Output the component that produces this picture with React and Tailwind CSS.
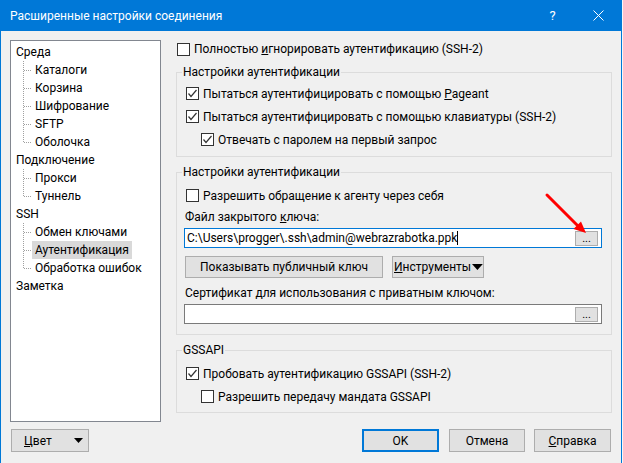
import React from 'react';

const font = "font-['Segoe_UI',Roboto,'Noto_Sans',sans-serif]";

function Box({ checked }) {
  return (
    <span className="flex h-[13px] w-[13px] shrink-0 items-center justify-center border border-[#333333] bg-white">
      {checked && (
        <svg width="11" height="11" viewBox="0 0 11 11">
          <path d="M1.5 5.5 L4 8.5 L9.5 2" fill="none" stroke="#333333" strokeWidth="1.2" />
        </svg>
      )}
    </span>
  );
}

function Check({ checked, children, className = '' }) {
  return (
    <div className={`flex h-[23px] items-center gap-[4px] ${className}`}>
      <Box checked={checked} />
      <span className="leading-[16px]">{children}</span>
    </div>
  );
}

function Group({ title, children, className = '' }) {
  return (
    <fieldset className={`border border-[#dcdcdc] px-[8px] ${className}`}>
      <legend className="-ml-[3px] px-[1px] leading-[16px]">{title}</legend>
      {children}
    </fieldset>
  );
}

function Connector({ last }) {
  return (
    <svg width="9" height="18" className="shrink-0">
      <line x1="0.5" y1="0" x2="0.5" y2={last ? 9 : 18} stroke="#a0a0a0" strokeDasharray="1 1" />
      <line x1="1" y1="9.5" x2="9" y2="9.5" stroke="#a0a0a0" strokeDasharray="1 1" />
    </svg>
  );
}

const tree = [
  { name: 'Среда', kids: ['Каталоги', 'Корзина', 'Шифрование', 'SFTP', 'Оболочка'] },
  { name: 'Подключение', kids: ['Прокси', 'Туннель'] },
  { name: 'SSH', kids: ['Обмен ключами', 'Аутентификация', 'Обработка ошибок'] },
  { name: 'Заметка', kids: [] },
];

function Tree() {
  return (
    <div className="h-[382px] w-[151px] border border-[#828790] bg-white pt-[2px]">
      {tree.map((node) => (
        <div key={node.name}>
          <div className="flex h-[18px] items-center pl-[5px]">{node.name}</div>
          {node.kids.map((kid, i) => (
            <div key={kid} className="flex h-[18px] items-center pl-[12px]">
              <Connector last={i === node.kids.length - 1} />
              <span
                className={`flex h-[18px] items-center px-[3px] ${kid === 'Аутентификация' ? 'bg-[#d9d9d9]' : ''}`}
              >
                {kid}
              </span>
            </div>
          ))}
        </div>
      ))}
    </div>
  );
}

function Dots() {
  return (
    <span className="flex h-[15px] w-[23px] shrink-0 items-end justify-center border border-[#adadad] bg-[#e1e1e1] pb-[1px] text-[11px] leading-[11px]">
      ...
    </span>
  );
}

export default function App() {
  return (
    <div className={`flex h-[463px] w-[623px] bg-[#f3f3f3] text-[12px] text-black ${font}`}>
      <div className="relative flex h-[463px] w-[622px] flex-col border-x border-[#0078d7] bg-[#f0f0f0]">
        {/* title bar */}
        <div className="-mx-px flex h-[31px] items-center bg-[#0078d7] text-white">
          <span className="pl-[10px] text-[12px]">Расширенные настройки соединения</span>
          <span className="flex-1" />
          <span className="flex h-[31px] w-[45px] items-center justify-center text-[13px]">?</span>
          <span className="flex h-[31px] w-[47px] items-center justify-center">
            <svg width="11" height="11" viewBox="0 0 11 11">
              <path d="M0.5 0.5 L10.5 10.5 M10.5 0.5 L0.5 10.5" stroke="white" strokeWidth="1" />
            </svg>
          </span>
        </div>

        {/* body */}
        <div className="flex items-start gap-[15px] pl-[9px] pt-[9px]">
          <Tree />

          <div className="flex w-[436px] flex-col">
            <div className="mt-[1px] flex h-[16px] items-center gap-[4px] pl-[1px]">
              <Box />
              <span>
                Полностью <span className="underline">и</span>гнорировать аутентификацию (SSH-2)
              </span>
            </div>

            <Group title="Настройки аутентификации" className="mt-[7px] pb-[5px]">
              <div className="pt-[2px]">
                <Check checked className="pl-[1px]">
                  Пытаться аутентифицировать с помощью <span className="underline">P</span>ageant
                </Check>
                <Check checked className="pl-[1px]">
                  Пытаться аутентифицировать с помощью клавиатуры (SSH-2)
                </Check>
                <Check checked className="pl-[16px]">
                  Отвечать с паролем на первый запрос
                </Check>
              </div>
            </Group>

            <Group title="Настройки аутентификации" className="mt-[7px] pb-[10px]">
              <div className="pt-[4px]">
                <Check className="pl-[1px]">Разрешить обращение к агенту через себя</Check>
                <div className="mt-[2px] h-[16px] leading-[16px]">
                  Файл закрытого <span className="underline">к</span>люча:
                </div>
                <div className="-ml-[1px] mt-[3px] flex h-[20px] w-[418px] items-center border border-[#0078d7] bg-white pl-[2px] pr-[3px]">
                  <span className="leading-[16px]">C:\Users\progger\.ssh\admin@webrazrabotka.ppk</span>
                  <span className="h-[14px] w-px bg-black" />
                  <span className="flex-1" />
                  <Dots />
                </div>
                <div className="mt-[8px] flex gap-[9px]">
                  <button className="h-[22px] w-[198px] border border-[#adadad] bg-[#e1e1e1]">
                    Показывать публичный ключ
                  </button>
                  <button className="flex h-[22px] w-[92px] items-center border border-[#adadad] bg-[#e1e1e1] pl-px">
                    <span>
                      <span className="underline">И</span>нструменты
                    </span>
                    <svg width="11" height="6" viewBox="0 0 11 6" className="ml-[1px]">
                      <polygon points="0,0 11,0 5.5,6" fill="black" />
                    </svg>
                  </button>
                </div>
                <div className="mt-[7px] h-[16px] leading-[16px]">
                  Сертификат для использования с приватным ключом:
                </div>
                <div className="-ml-[1px] mt-[3px] flex h-[20px] w-[418px] items-center justify-end border border-[#7a7a7a] bg-white pr-[3px]">
                  <Dots />
                </div>
              </div>
            </Group>

            <Group title="GSSAPI" className="mt-[7px] pb-[4px]">
              <div className="pt-[4px]">
                <Check checked className="pl-[1px]">
                  Пробовать аутентификацию GSSAPI (SSH-2)
                </Check>
                <Check className="pl-[16px]">Разрешить передачу мандата GSSAPI</Check>
              </div>
            </Group>
          </div>
        </div>

        {/* bottom buttons */}
        <div className="mt-[7px] flex items-center pl-[10px] pr-[10px]">
          <button className="flex h-[23px] w-[78px] items-center justify-between border border-[#adadad] bg-[#e1e1e1] pl-[12px] pr-[5px]">
            <span>
              <span className="underline">Ц</span>вет
            </span>
            <svg width="9" height="5" viewBox="0 0 9 5">
              <polygon points="0,0 9,0 4.5,5" fill="black" />
            </svg>
          </button>
          <span className="flex-1" />
          <button className="h-[23px] w-[77px] border-2 border-[#0078d7] bg-[#e1e1e1]">OK</button>
          <button className="ml-[10px] h-[23px] w-[76px] border border-[#adadad] bg-[#e1e1e1]">Отмена</button>
          <button className="ml-[9px] h-[23px] w-[77px] border border-[#adadad] bg-[#e1e1e1]">
            <span className="underline">С</span>правка
          </button>
        </div>

        {/* red annotation arrow */}
        <svg width="50" height="50" viewBox="0 0 50 50" className="absolute left-[539px] top-[190px]">
          <line x1="7" y1="5" x2="38" y2="36" stroke="#ff0000" strokeWidth="3" strokeLinecap="round" />
          <polygon points="46,43 33.5,39 41,31.5" fill="#ff0000" />
        </svg>
      </div>
      <div className="flex-1 bg-[#f7f7f7]" />
    </div>
  );
}
